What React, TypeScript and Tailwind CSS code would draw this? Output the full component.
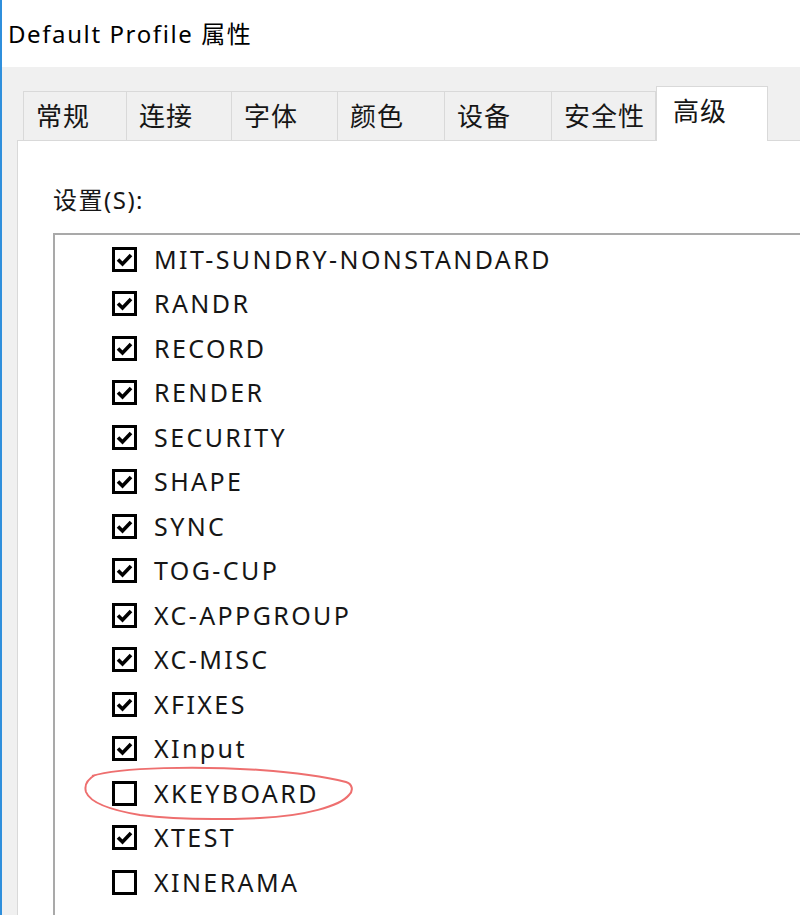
import React from "react";

const tabs = [
  { label: "常规", w: "w-[104px]" },
  { label: "连接", w: "w-[106px]" },
  { label: "字体", w: "w-[107px]" },
  { label: "颜色", w: "w-[108px]" },
  { label: "设备", w: "w-[108px]" },
  { label: "安全性", w: "w-[105px]" },
];

const items = [
  { name: "MIT-SUNDRY-NONSTANDARD", on: true },
  { name: "RANDR", on: true },
  { name: "RECORD", on: true },
  { name: "RENDER", on: true },
  { name: "SECURITY", on: true },
  { name: "SHAPE", on: true },
  { name: "SYNC", on: true },
  { name: "TOG-CUP", on: true },
  { name: "XC-APPGROUP", on: true },
  { name: "XC-MISC", on: true },
  { name: "XFIXES", on: true },
  { name: "XInput", on: true },
  { name: "XKEYBOARD", on: false },
  { name: "XTEST", on: true },
  { name: "XINERAMA", on: false },
];

const font = { fontFamily: '"Noto Sans", "Noto Sans CJK SC", sans-serif' };

const Check = ({ on }: { on: boolean }) => (
  <div className="w-[25px] h-[25px] border-[3px] border-black bg-white flex items-center justify-center shrink-0">
    {on && (
      <svg width="19" height="19" viewBox="0 0 19 19">
        <path d="M3 9.5 L7.5 14 L16 5" fill="none" stroke="#000" strokeWidth="3.6" />
      </svg>
    )}
  </div>
);

export default function App() {
  return (
    <div
      className="relative w-[800px] h-[915px] overflow-hidden flex bg-white text-[#161616]"
      style={font}
    >
      <div className="w-[2px] bg-[#2f8fdc] shrink-0" />
      <div className="flex-1 flex flex-col min-w-0">
        {/* title */}
        <div className="h-[67px] bg-white flex items-center pl-[6px] text-[24px] tracking-[1.6px] text-black">
          Default Profile 属性
        </div>

        {/* tab strip */}
        <div className="h-[73px] bg-[#f0f0f0] flex items-end pl-[21px] pt-[18px]">
          {tabs.map((t) => (
            <div
              key={t.label}
              className={`${t.w} h-[49px] border border-b-0 border-[#d9d9d9] -ml-px first:ml-0 flex items-center pl-[12px] text-[26px] tracking-[1px] shrink-0`}
            >
              {t.label}
            </div>
          ))}
          <div className="w-[112px] h-[55px] -mb-px bg-white border border-b-0 border-[#d9d9d9] flex items-center pl-[16px] pb-[6px] text-[26px] tracking-[1px] shrink-0 relative z-10">
            高级
          </div>
        </div>

        {/* panel */}
        <div className="flex-1 flex bg-[#f0f0f0]">
          <div className="w-[15px] shrink-0" />
          <div className="flex-1 bg-white border-l border-t border-[#d9d9d9] flex flex-col pl-[35px]">
            <div className="h-[92px] flex items-center pt-[26px] text-[24px] tracking-[1.5px]">设置(S):</div>
            <div className="flex-1 border-l-2 border-t-2 border-[#a9a9a9] pt-[2px] pl-[57px]">
              {items.map((it) => (
                <div key={it.name} className="h-[44.5px] flex items-center gap-[17px]">
                  <Check on={it.on} />
                  <span className="text-[25px] tracking-[2.4px] leading-none">{it.name}</span>
                </div>
              ))}
            </div>
          </div>
        </div>
      </div>

      {/* red hand-drawn circle annotation */}
      <svg className="absolute left-0 top-0 pointer-events-none" width="800" height="915">
        <path
          d="M92 776 C120 767 200 766 260 770 C300 773 330 778 346 782 C352 784 354 790 349 795 C340 806 305 816 260 818 C210 820 170 819 140 815 C110 810 90 802 86 792 C84 785 88 779 95 775"
          fill="none"
          stroke="#ee6f6f"
          strokeWidth="2"
        />
      </svg>
    </div>
  );
}
